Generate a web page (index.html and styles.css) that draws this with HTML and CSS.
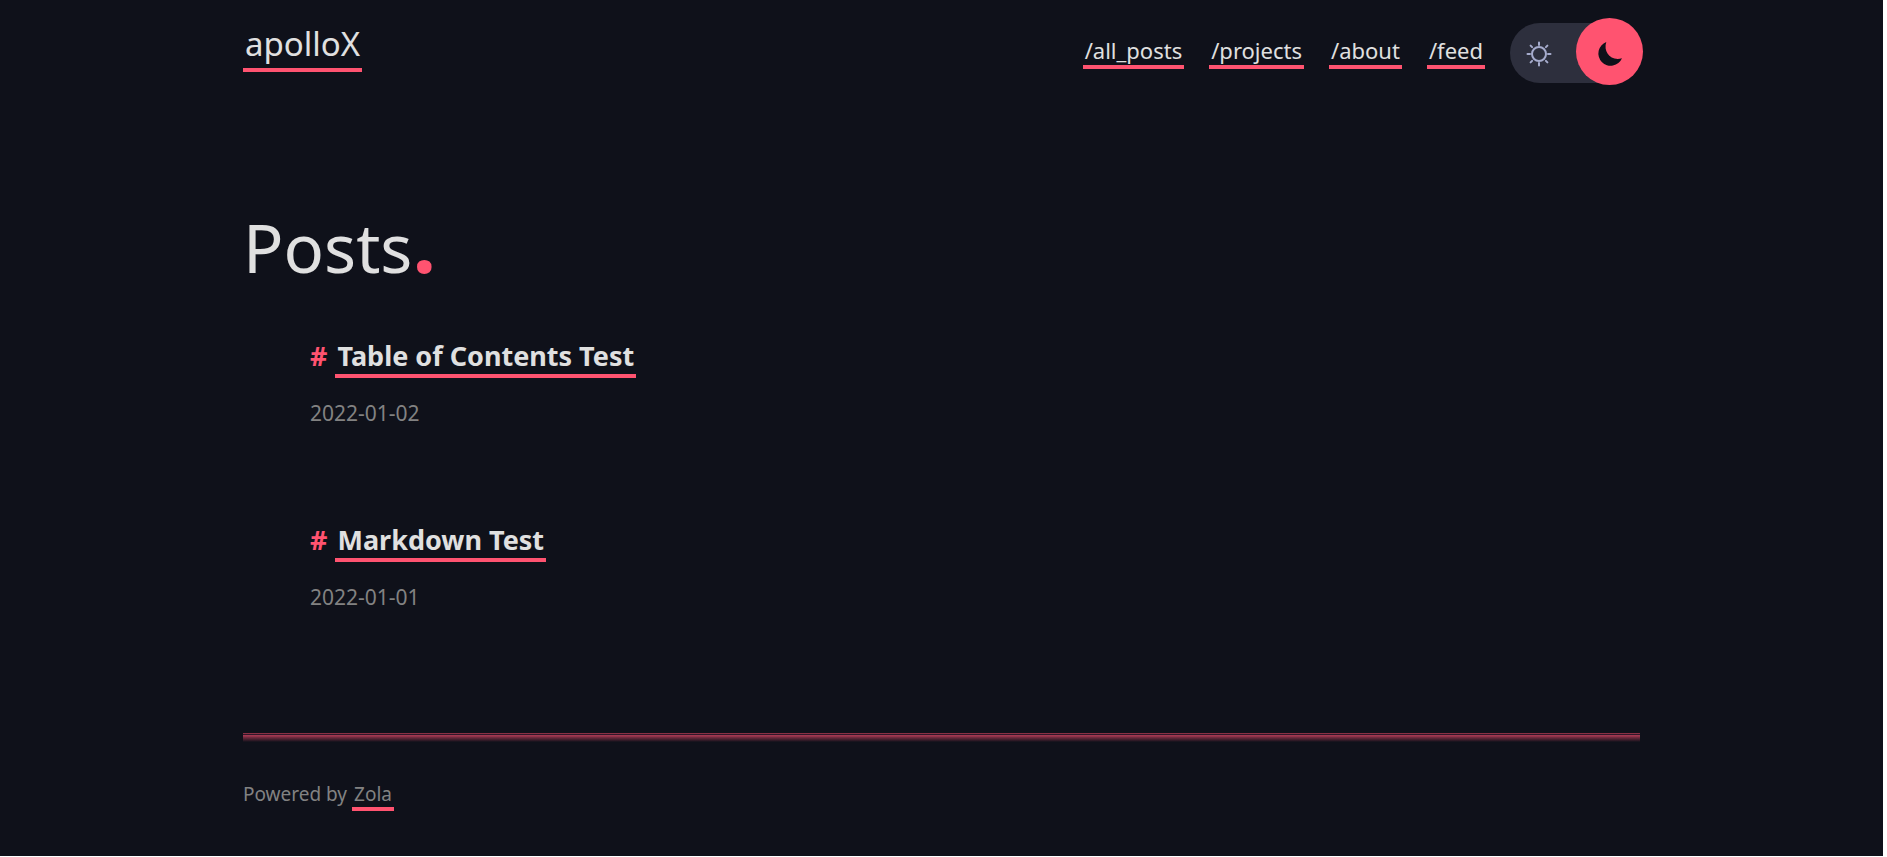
FILE: index.html
```html
<!DOCTYPE html>
<html lang="en">
<head>
<meta charset="utf-8">
<title>apolloX</title>
<meta name="viewport" content="width=device-width, initial-scale=1">
<link rel="stylesheet" href="styles.css">
</head>
<body>
<div class="page">
<div class="content">
  <header class="header">
    <a class="link brand" href="#">apolloX</a>
    <div class="header-side">
      <nav class="nav">
        <a class="link" href="#">/all_posts</a>
        <a class="link" href="#">/projects</a>
        <a class="link" href="#">/about</a>
        <a class="link" href="#">/feed</a>
      </nav>
      <button class="toggle" type="button" aria-label="Toggle dark mode">
        <svg class="sun" viewBox="0 0 26 26" aria-hidden="true"><circle cx="13" cy="13" r="7"/><path d="M13 1.500v2.500M13 22v2.500M1.500 13h2.500M22 13h2.500M4.600 4.600l1.500 1.500M19.900 19.900l1.500 1.500M4.600 21.400l1.500-1.500M19.900 6.100l1.500-1.500"/></svg>
        <span class="knob"><svg class="moon" viewBox="0 0 24 24" aria-hidden="true"><path d="M8.300 0C5 9.500 12.500 19.500 24 16.300A12.300 12.300 0 1 1 8.300 0Z"/></svg></span>
      </button>
    </div>
  </header>
  <main>
    <h1 class="page-title">Posts<span class="accent dot">.</span></h1>
    <ul class="posts">
      <li class="post">
        <h2 class="post-title"><span class="accent mark">#</span> <a class="link" href="#">Table of Contents Test</a></h2>
        <time class="date" datetime="2022-01-02">2022-01-02</time>
      </li>
      <li class="post">
        <h2 class="post-title"><span class="accent mark">#</span> <a class="link" href="#">Markdown Test</a></h2>
        <time class="date" datetime="2022-01-01">2022-01-01</time>
      </li>
    </ul>
  </main>
  <footer class="footer">Powered by <a class="link" href="#">Zola</a></footer>
</div>
</div>
</body>
</html>
```
FILE: styles.css
```css
* { box-sizing: border-box; }
html { background: #fff; }
body {
  margin: 0;
  padding: 0 4px 1px 0;
  min-height: 100vh;
  display: flex;
  color: #e0e0e0;
  font-family: "Noto Sans", sans-serif;
  font-size: 22px;
  line-height: 36px;
}
.page { flex: 1; background: #0f111a; padding: 0 24px 36px; }
.content { max-width: 1397px; margin: 0 auto; }
.link {
  color: inherit;
  text-decoration: none;
  padding: 0 2px;
  border-bottom: 4px solid #ff5370;
}
.accent { color: #ff5370; }
.header { display: flex; justify-content: space-between; align-items: flex-start; padding-top: 20px; }
.brand { font-size: 33px; line-height: 48px; }
.header-side { display: flex; align-items: flex-start; gap: 25px; }
.nav { display: flex; gap: 25px; padding-top: 15px; }
.nav .link { line-height: 30px; }
.toggle {
  position: relative;
  width: 130px;
  height: 60px;
  margin: 3px 0 0;
  padding: 2px 0 0 16px;
  display: flex;
  align-items: center;
  border: 0;
  border-radius: 30px;
  background: #2d2f3d;
}
.sun { width: 26px; height: 26px; fill: none; stroke: #a6accd; stroke-width: 2; stroke-linecap: round; }
.knob {
  position: absolute;
  right: -3px;
  top: -5px;
  width: 67px;
  height: 67px;
  padding-top: 4px;
  display: grid;
  place-items: center;
  border-radius: 50%;
  background: #ff5370;
}
.moon { width: 24px; height: 24px; fill: #0f111a; overflow: visible; }
.page-title { margin: 116px 0 0; font-size: 67px; font-weight: 400; line-height: 96px; }
.dot { font-size: 84px; line-height: 0; font-weight: 700; }
.posts { list-style: none; margin: 40px 0 0; padding: 0 0 0 67px; }
.post { margin-bottom: 88px; }
.post-title { margin: 0 0 18px; font-size: 27px; line-height: 42px; }
.mark { margin-right: 1px; }
.date, .footer { color: #828282; }
.date { display: block; font-size: 21px; }
.footer {
  margin-top: 118px;
  padding-top: 43px;
  font-size: 19px;
  background: linear-gradient(#8a3044 0 1px, #30172a 1px 2px, #a03850 2px 3px, #7b2d42 4px, #0f111a 9px) no-repeat 0 0 / 100% 9px;
}
```
